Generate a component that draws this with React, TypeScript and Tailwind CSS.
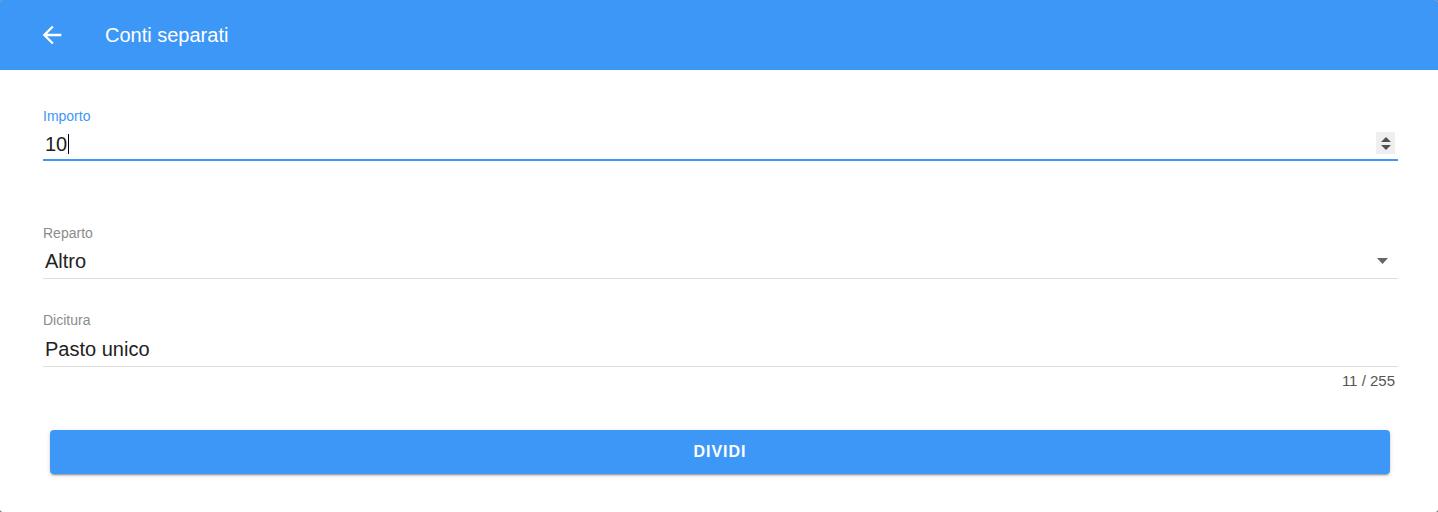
import React from "react";

const font = { fontFamily: '"Liberation Sans", Arial, sans-serif' };

const BackArrow: React.FC = () => (
  <svg width="28" height="28" viewBox="0 0 24 24" fill="white">
    <path d="M20 11H7.83l5.59-5.59L12 4l-8 8 8 8 1.41-1.41L7.83 13H20v-2z" />
  </svg>
);

const Spinner: React.FC = () => (
  <div className="flex h-[22px] w-[19px] flex-col items-center justify-center gap-[3px] bg-[#efefef]">
    <svg width="10" height="5" viewBox="0 0 10 5">
      <path d="M5 0L10 5H0z" fill="#505050" />
    </svg>
    <svg width="10" height="5" viewBox="0 0 10 5">
      <path d="M0 0H10L5 5z" fill="#505050" />
    </svg>
  </div>
);

const Field: React.FC<{
  label: string;
  value: string;
  top: string;
  rowH: string;
  right?: React.ReactNode;
}> = ({ label, value, top, rowH, right }) => (
  <div className={top}>
    <div className="text-[14px] leading-[16px] text-[#8c8c8c]">{label}</div>
    <div
      className={`flex ${rowH} items-center border-b border-[#dedede] pt-[3px] pl-[2px]`}
    >
      <span className="flex-1 text-[20px] leading-[24px] text-[#222]">
        {value}
      </span>
      {right}
    </div>
  </div>
);

export default function App() {
  return (
    <div className="h-[512px] w-[1438px] bg-[#6f6f6f]" style={font}>
      <div className="h-[512px] overflow-hidden rounded-[3px] bg-white">
        <div className="flex h-[70px] items-center bg-[#3d97f6]">
          <div className="ml-[38px] flex items-center">
            <BackArrow />
          </div>
          <span className="ml-[39px] text-[20px] text-white">Conti separati</span>
        </div>

        <div className="pl-[43px] pr-[40px]">
          <div className="mt-[38px]">
            <div className="text-[14px] leading-[16px] text-[#3d97f6]">
              Importo
            </div>
            <div className="flex h-[37px] items-center border-b-2 border-[#3d97f6] pt-[3px] pl-[2px]">
              <span className="flex-1 text-[20px] leading-[24px] text-[#222]">
                10
                <span className="ml-[1px] inline-block h-[20px] w-px translate-y-[3px] bg-black" />
              </span>
              <div className="mr-[3px]">
                <Spinner />
              </div>
            </div>
          </div>

          <Field
            label="Reparto"
            value="Altro"
            top="mt-[64px]"
            rowH="h-[38px]"
            right={
              <svg
                width="11"
                height="6"
                viewBox="0 0 11 6"
                className="mr-[10px]"
              >
                <path d="M0 0H11L5.5 6z" fill="#666" />
              </svg>
            }
          />

          <Field
            label="Dicitura"
            value="Pasto unico"
            top="mt-[33px]"
            rowH="h-[39px]"
          />

          <div className="mt-[6px] pr-[3px] text-right text-[15px] leading-[16px] text-[#555]">
            11 / 255
          </div>

          <div className="ml-[7px] mr-[8px] mt-[41px]">
            <button className="flex h-[44px] w-full items-center justify-center rounded-[4px] bg-[#3d97f6] text-[16px] font-bold tracking-[1px] text-white shadow-[0_3px_1px_-2px_rgba(0,0,0,0.2),0_2px_2px_0_rgba(0,0,0,0.14),0_1px_5px_0_rgba(0,0,0,0.12)]">
              DIVIDI
            </button>
          </div>
        </div>
      </div>
    </div>
  );
}
